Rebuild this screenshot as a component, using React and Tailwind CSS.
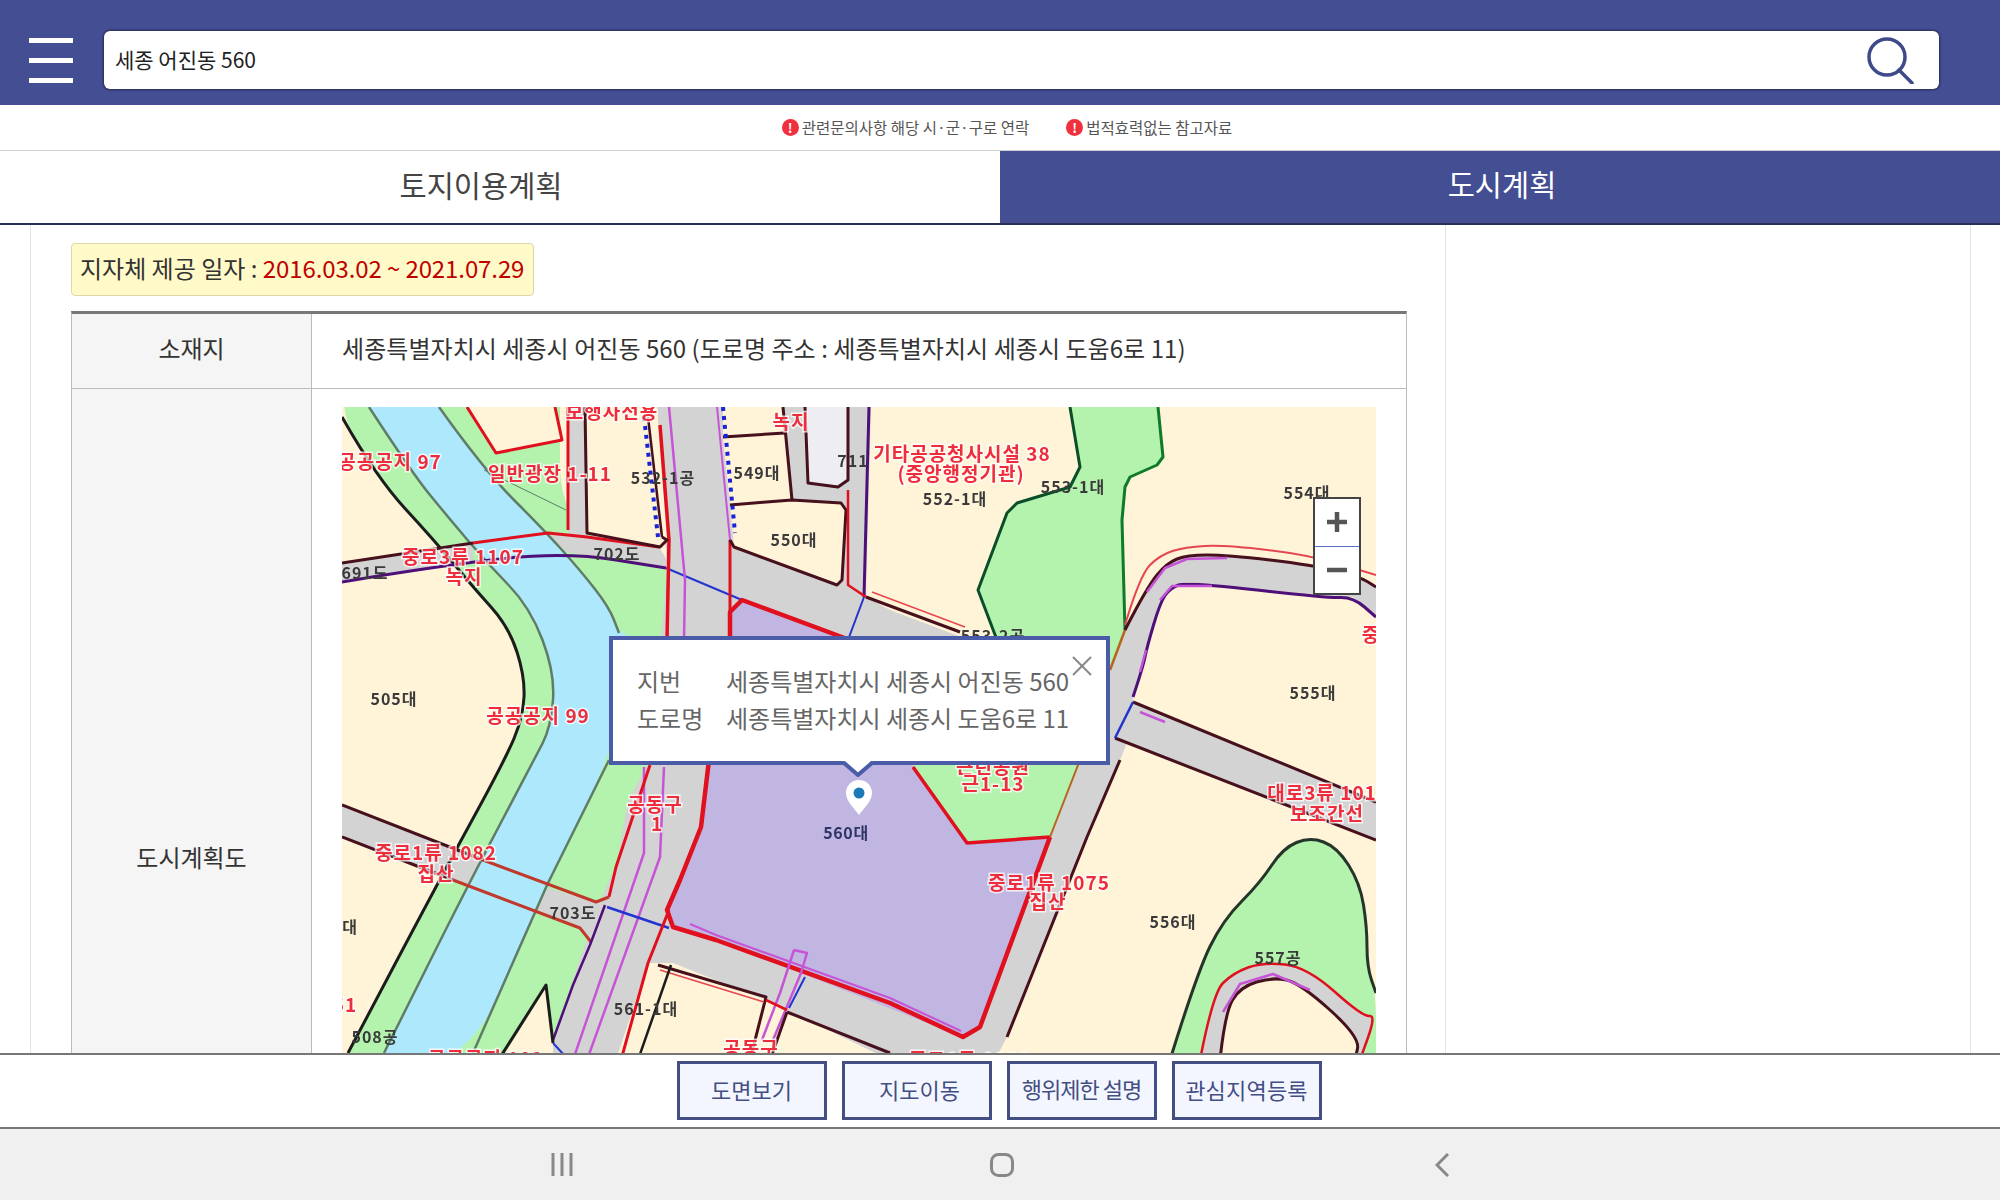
// Land use plan viewer: search header, tabs, plan table with parcel map, action bar
import React from 'react';

const CREAM = '#fff3d8';
const GREEN = '#b3f3ad';
const WATER = '#aee8fc';
const ROAD = '#d4d3d4';
const LILAC = '#c0b6e1';
const MAROON = '#46101c';
const RED = '#e0101f';
const THIN = '#e4474f';
const PURPLE = '#c654d6';
const DEEP = '#4e1078';
const BLUE = '#2233d0';
const RIVER = '#5f7d66';

// rounds off a point list so river banks and bends don't look jagged
const curve = (points) => {
  const p = points.split(' ').map((s) => s.split(',').map(Number));
  let d = `M${p[0]}`;
  for (let i = 1; i < p.length - 1; i++) {
    const mid = [(p[i][0] + p[i + 1][0]) / 2, (p[i][1] + p[i + 1][1]) / 2];
    d += ` Q${p[i]} ${mid}`;
  }
  return `${d} L${p[p.length - 1]}`;
};

// all map coordinates are page pixels, the svg viewBox starts at the map corner
const fills = [
  [GREEN, '345,400 342,417 376,477 434,540 473,587 509,627 525,677 523,717 505,760 441,877 348,1053 348,1060 660,1060 672,560 560,530 560,400', true],
  [GREEN, '566,552 666,568 670,640 668,780 590,780 590,600'],
  [WATER, '369,407 412,473 448,517 487,563 530,607 555,673 551,727 534,760 469,883 384,1053 384,1060 473,1060 548,883 609,760 640,640 619,633 609,607 580,570 544,530 484,470 439,407', true],
  [GREEN, '1070,407 1080,467 1070,487 1017,503 1007,513 978,590 997,640 1110,680 1125,630 1122,520 1125,487 1130,477 1157,465 1163,457 1158,407'],
  [GREEN, '1170,1060 1197,973 1223,920 1260,883 1283,848 1310,837 1337,847 1360,883 1367,927 1367,967 1376,993 1376,1060', true],
  [ROAD, '1200,1060 1213,993 1233,973 1263,962 1307,967 1363,1017 1376,1015 1360,1060', true],
  [CREAM, '1220,1060 1225,1013 1240,987 1273,977 1300,983 1360,1037 1355,1060', true],
  [CREAM, '467,407 496,453 562,440 555,407'],
  [CREAM, '501,1060 546,985 553,1043 553,1060'],
  [ROAD, '568,407 585,407 587,540 568,540'],
  [ROAD, '342,563 473,543 473,563 342,582'],
  [ROAD, '548,533 587,537 659,547 667,560 666,568 566,552'],
  [ROAD, '657,407 716,407 730,540 730,636 709,760 701,827 667,910 648,963 616,1060 553,1060 553,1037 573,980 600,900 616,867 628,800 650,760 667,568'],
  [ROAD, '716,407 871,407 866,597 890,610 1133,702 1376,802 1376,840 1167,760 1115,738 742,600 730,612 730,540'],
  [ROAD, '1125,630 1147,587 1167,563 1187,555 1227,555 1313,565 1360,577 1376,587 1376,617 1353,597 1327,598 1187,582 1170,588 1160,603 1147,647 1143,667 1133,697 1133,720 1125,748 1120,760 1087,837 1007,1037 995,1060 940,1060 963,1037 980,1027 1050,837 1080,760 1100,690'],
  [ROAD, '667,910 673,927 716,940 890,1003 963,1037 1000,1060 890,1060 766,1000 673,963 648,963'],
  [ROAD, '342,805 483,860 470,885 453,880 342,837'],
  [ROAD, '548,888 596,902 609,897 605,920 591,942 580,928 535,910'],
  [LILAC, '730,612 742,600 913,665 913,767 967,843 1050,837 980,1027 963,1037 716,940 673,927 667,910 701,827 709,760 728,640'],
  [GREEN, '913,660 1110,735 1080,760 1050,837 967,843 913,767'],
  [CREAM, '723,407 783,407 785,433 723,437'],
  [CREAM, '723,437 785,433 792,500 730,505'],
  [CREAM, '730,505 792,500 841,503 846,510 842,580 837,585 734,547'],
  ['#eeeef2', '805,407 848,407 848,480 838,487 808,483'],
  [CREAM, '585,407 657,407 667,540 587,533'],
];

const lines = [
  ['#1c1c1c', 3, '342,417 376,477 434,540 473,587 509,627 525,677 523,717 505,760 441,877 348,1053', true],
  [RIVER, 2.5, '369,407 412,473 448,517 487,563 530,607 555,673 551,727 534,760 469,883 384,1053', true],
  [RIVER, 2.5, '439,407 484,470 544,530 580,570 609,607 619,633', true],
  [RIVER, 2.5, '609,760 548,883 473,1053'],
  [RIVER, 1, '484,470 566,510'],
  [RED, 3, '467,407 496,453 562,440 555,407'],
  [MAROON, 3, '342,563 473,543'],
  [RED, 3, '473,543 548,533 587,537 659,547'],
  [DEEP, 3, '342,582 443,565 566,552 666,568', true],
  [BLUE, 2, '666,568 742,600'],
  [RED, 4.5, '730,640 730,612 742,600 850,640'],
  [RED, 3.5, '660,425 669,540 667,640'],
  [RED, 3, '730,540 730,612'],
  [PURPLE, 2.5, '669,407 685,580 684,640'],
  [PURPLE, 2, '717,407 730,540'],
  [RED, 3, '568,407 568,530'],
  [MAROON, 3, '585,407 587,533 660,547 667,540 662,537'],
  [MAROON, 2.5, '648,417 662,537'],
  [MAROON, 3, '723,437 785,433'],
  [MAROON, 3, '730,505 792,500 841,503 846,510 842,580 837,585 734,547 730,540'],
  [MAROON, 3, '783,407 792,500'],
  [MAROON, 3, '805,407 808,483 838,487 848,480 848,407'],
  [DEEP, 3, '869,407 864,597'],
  [RED, 2.5, '848,490 848,585 866,597'],
  [BLUE, 2, '864,597 848,640'],
  [MAROON, 3, '866,597 960,632'],
  [THIN, 1.5, '872,592 965,627'],
  [PURPLE, 2.5, '644,767 644,853 573,1060'],
  [PURPLE, 2.5, '664,767 660,857 587,1060'],
  [RED, 3, '650,765 616,867 609,897'],
  [MAROON, 3, '342,805 483,860'],
  [MAROON, 3, '342,837 453,880'],
  ['#c0392b', 3, '483,860 596,902 609,897'],
  ['#c0392b', 3, '453,880 580,928 591,942'],
  [BLUE, 2.5, '607,907 669,928'],
  [DEEP, 2.5, '605,905 590,945 573,985 553,1040'],
  [RED, 3, '669,910 648,963 621,1060'],
  [RED, 4.5, '709,760 701,827 680,880 667,910 673,927 716,940 890,1003 963,1037 980,1027 1050,837'],
  [PURPLE, 2, '690,924 716,935 890,998 961,1031'],
  [RED, 3.5, '913,767 967,843 1050,837'],
  ['#b5651d', 2, '1050,837 1080,760'],
  [PURPLE, 2.5, '794,950 807,953 801,973 773,1040'],
  [PURPLE, 2.5, '794,950 780,993 762,1040'],
  [BLUE, 2, '805,977 789,1008'],
  [MAROON, 3, '658,965 766,997 750,1060'],
  [MAROON, 3, '787,1012 890,1053'],
  [THIN, 1.5, '660,970 764,1002'],
  [RED, 2.5, '766,1000 787,1010'],
  [MAROON, 3, '787,1012 770,1060'],
  ['#1c1c1c', 2.5, '671,965 638,1060'],
  ['#1c1c1c', 3, '501,1056 546,985 553,1043'],
  [BLUE, 2, '553,1043 565,1056'],
  ['#0b4f2a', 3, '1070,407 1080,467 1070,487 1017,503 1007,513 978,590 997,640'],
  ['#0f7a2a', 3, '1158,407 1163,457 1157,465 1130,477 1125,487 1122,520 1125,630'],
  ['#b5651d', 2.5, '1125,630 1110,670'],
  [THIN, 2, '1125,625 1140,575 1160,555 1185,547 1225,545 1310,555 1376,575', true],
  [MAROON, 3, '1125,630 1147,587 1167,563 1187,555 1227,555 1313,565 1360,577 1376,587', true],
  [DEEP, 3, '1133,697 1143,667 1147,647 1160,603 1170,588 1187,582 1327,598 1353,597 1376,617', true],
  [PURPLE, 2.5, '1147,592 1165,568 1187,559 1227,558'],
  [PURPLE, 2.5, '1160,600 1172,586 1212,586'],
  [PURPLE, 2.5, '1146,650 1140,672'],
  [MAROON, 3, '1133,702 1376,802'],
  [MAROON, 3, '1115,738 1376,840'],
  [PURPLE, 2.5, '1140,712 1165,722'],
  [BLUE, 2.5, '1133,702 1115,738'],
  [MAROON, 3, '1120,760 1087,837 1007,1037'],
  ['#25352a', 3, '1170,1060 1197,973 1223,920 1260,883 1283,848 1310,837 1337,847 1360,883 1367,927 1367,967 1376,993', true],
  [RED, 2.5, '1200,1060 1213,993 1233,973 1263,962 1307,967 1363,1017 1376,1015 1360,1060', true],
  [MAROON, 3, '1220,1060 1225,1013 1240,987 1273,977 1300,983 1360,1037 1355,1060', true],
  [PURPLE, 2.5, '1223,1012 1240,984 1273,974 1310,990'],
];

const redLabels = [
  ['보행자전용', 612, 410],
  ['공공공지 97', 390, 460],
  ['일반광장 1-11', 550, 472],
  ['중로3류 1107', 463, 555],
  ['녹지', 464, 575],
  ['공공공지 99', 538, 714],
  ['기타공공청사시설 38', 962, 452],
  ['(중앙행정기관)', 961, 472],
  ['녹지', 791, 420],
  ['중', 1371, 633],
  ['근린공원', 993, 765],
  ['근1-13', 993, 782],
  ['공동구', 655, 803],
  ['1', 657, 822],
  ['중로1류 1082', 436, 851],
  ['집산', 436, 872],
  ['중로1류 1075', 1049, 881],
  ['집산', 1048, 900],
  ['대로3류 101', 1322, 791],
  ['보조간선', 1327, 812],
  ['공공공지 102', 486, 1057],
  ['공동구', 751, 1047],
  ['중로1류 1081', 970, 1058],
  ['51', 345, 1003],
];

const lotLabels = [
  ['532-1공', 663, 477],
  ['549대', 757, 472],
  ['711', 853, 460],
  ['550대', 794, 539],
  ['702도', 617, 553],
  ['691도', 365, 572],
  ['505대', 394, 698],
  ['552-1대', 955, 498],
  ['553-1대', 1073, 486],
  ['554대', 1307, 492],
  ['553-2공', 993, 635],
  ['555대', 1313, 692],
  ['703도', 573, 912],
  ['대', 350, 926],
  ['508공', 375, 1036],
  ['561-1대', 646, 1008],
  ['556대', 1173, 921],
  ['557공', 1278, 957],
];

const ParcelMap = () => (
  <svg viewBox="342 407 1034 900" className="block w-[1034px] h-[900px] blur-[0.5px]">
    <rect x="342" y="407" width="1034" height="900" fill={CREAM} />
    {fills.map(([color, points, smooth], i) =>
      smooth ? <path key={i} d={`${curve(points)} Z`} fill={color} /> : <polygon key={i} points={points} fill={color} />
    )}
    {lines.map(([color, width, points, smooth], i) =>
      smooth ? (
        <path key={i} d={curve(points)} fill="none" stroke={color} strokeWidth={width} strokeLinejoin="round" />
      ) : (
        <polyline key={i} points={points} fill="none" stroke={color} strokeWidth={width} strokeLinejoin="round" />
      )
    )}
    <polyline points="648,417 662,537" fill="none" stroke="#1a22d8" strokeWidth="4" strokeDasharray="4 5" transform="translate(-4 0)" />
    <polyline points="723,407 735,533" fill="none" stroke="#1a22d8" strokeWidth="4" strokeDasharray="4 5" />
    {lotLabels.map(([label, x, y]) => (
      <text key={label} x={x} y={y} textAnchor="middle" dominantBaseline="central" fontSize="16" fontWeight="700" letterSpacing="1" fill="#3a3a3a">
        {label}
      </text>
    ))}
    {redLabels.map(([label, x, y]) => (
      <text key={label + x} x={x} y={y} textAnchor="middle" dominantBaseline="central" fontSize="19" fontWeight="700" letterSpacing="1" fill="#ee2c3c" stroke="#ffffff" strokeOpacity="0.75" strokeWidth="3" paintOrder="stroke">
        {label}
      </text>
    ))}
    <path d="M859 780c-7.5 0-13 5.800-13 13 0 8 8 15 13 22 5-7 13-14 13-22 0-7.200-5.500-13-13-13z" fill="#ffffff" />
    <circle cx="859" cy="793" r="5.500" fill="#1a7ab8" />
    <text x="846" y="832" textAnchor="middle" dominantBaseline="central" fontSize="16" fontWeight="700" letterSpacing="0.6" fill="#2f3566">
      560대
    </text>
  </svg>
);

const Notice = ({ children }) => (
  <div className="flex items-center gap-[3px]">
    <span className="flex items-center justify-center w-[17px] h-[17px] rounded-full bg-[#f0303c] text-white text-[13px] font-bold leading-none">!</span>
    <span>{children}</span>
  </div>
);

const ActionButton = ({ children, className = '' }) => (
  <button className={`w-[150px] h-[59px] flex items-center justify-center border-[3px] border-[#434e83] bg-[#f4f6ff] text-[#434e83] text-[22px] ${className}`}>
    {children}
  </button>
);

const App = () => {
  return (
    <div className="w-full h-screen flex flex-col overflow-hidden bg-white font-['Noto_Sans_CJK_KR','Liberation_Sans',sans-serif]">
      <header className="h-[105px] shrink-0 flex items-center pl-[29px] pt-[15px] bg-[#434e93]">
        <div className="w-[44px] flex flex-col gap-[15px]">
          <span className="h-[5px] bg-white" />
          <span className="h-[5px] bg-white" />
          <span className="h-[5px] bg-white" />
        </div>
        <div className="ml-[31px] w-[1835px] h-[58px] flex items-center justify-between pl-[11px] pr-[25px] bg-white rounded-[6px] shadow-[0_0_2px_1px_rgba(20,20,40,0.6)]">
          <span className="text-[21px] text-[#222]">세종 어진동 560</span>
          <svg width="48" height="47" viewBox="0 0 48 47" fill="none" stroke="#3f4a8a" strokeWidth="3.500">
            <circle cx="21" cy="20" r="18" />
            <line x1="33" y1="33" x2="46" y2="46" strokeLinecap="round" />
          </svg>
        </div>
      </header>

      <div className="h-[46px] shrink-0 flex items-center justify-center gap-[37px] pl-[14px] text-[15.5px] text-[#555] border-b border-[#d0d0d0]">
        <Notice>관련문의사항 해당 시·군·구로 연락</Notice>
        <Notice>법적효력없는 참고자료</Notice>
      </div>

      <nav className="h-[74px] shrink-0 flex text-[29.5px]">
        <div className="w-[1000px] pr-[38px] pb-[6px] flex items-center justify-center border-b-2 border-[#2a2f55] text-[#444]">토지이용계획</div>
        <div className="w-[1000px] pl-[4px] pb-[7px] flex items-center justify-center border-b-2 border-[#2a2f55] bg-[#434e93] text-white">도시계획</div>
      </nav>

      <div className="flex-1 min-h-0 overflow-hidden flex pl-[30px]">
        <main className="w-[1416px] shrink-0 border-x border-[#e4e4e4] pl-[40px] pt-[18px]">
          <div className="w-[463px] h-[53px] flex items-center pl-[8px] pb-[4px] bg-[#fffac8] border border-[#ddd8a8] rounded-[4px] text-[24px] text-[#333] whitespace-nowrap">
            지자체 제공 일자 :&nbsp;<span className="text-[#c00000] tracking-[-0.1px]">2016.03.02 ~ 2021.07.29</span>
          </div>

          <div className="mt-[15px] w-[1336px] border-t-[3px] border-[#777] border-r border-l border-r-[#bbb] border-l-[#bbb] text-[24px] text-[#333]">
            <div className="flex h-[75px] border-b border-[#bbb]">
              <div className="w-[240px] shrink-0 pb-[6px] flex items-center justify-center bg-[#f5f5f5] border-r border-[#bbb]">소재지</div>
              <div className="flex-1 pb-[6px] flex items-center pl-[30px] whitespace-nowrap tracking-[0.05px]">세종특별자치시 세종시 어진동 560 (도로명 주소 : 세종특별자치시 세종시 도움6로 11)</div>
            </div>
            <div className="flex h-[937px]">
              <div className="w-[240px] shrink-0 pb-[2px] flex items-center justify-center bg-[#f5f5f5] border-r border-[#bbb]">도시계획도</div>
              <div className="flex-1 pl-[30px] pt-[18px]">
                <div className="relative w-[1034px] h-[900px] overflow-hidden">
                  <ParcelMap />

                  <div className="absolute left-[267px] top-[229px] w-[501px] h-[129px] border-4 border-[#4a5ba8] bg-white text-[#666] text-[24px] leading-[37px] pl-[24px] pt-[22px]">
                    <div className="flex">
                      <span className="w-[89px]">지번</span>
                      <span>세종특별자치시 세종시 어진동 560</span>
                    </div>
                    <div className="flex">
                      <span className="w-[89px]">도로명</span>
                      <span>세종특별자치시 세종시 도움6로 11</span>
                    </div>
                    <svg className="absolute left-[459px] top-[16px]" width="20" height="20" viewBox="0 0 20 20" stroke="#888" strokeWidth="2">
                      <line x1="1" y1="1" x2="19" y2="19" />
                      <line x1="19" y1="1" x2="1" y2="19" />
                    </svg>
                  </div>
                  <svg className="absolute left-[501px] top-[354px]" width="30" height="16" viewBox="0 0 30 16">
                    <path d="M0 0 L15 14 L30 0 Z" fill="#ffffff" />
                    <path d="M0 1 L15 14 L30 1" fill="none" stroke="#4a5ba8" strokeWidth="4" />
                  </svg>

                  <div className="absolute left-[971px] top-[90px] w-[48px] h-[98px] flex flex-col border-2 border-[#444] bg-white">
                    <div className="flex-1 flex items-center justify-center border-b border-[#5a6fc0]">
                      <svg width="20" height="20" viewBox="0 0 20 20" stroke="#555" strokeWidth="4.500">
                        <line x1="0" y1="10" x2="20" y2="10" />
                        <line x1="10" y1="0" x2="10" y2="20" />
                      </svg>
                    </div>
                    <div className="flex-1 flex items-center justify-center">
                      <svg width="20" height="6" viewBox="0 0 20 6" stroke="#555" strokeWidth="4.500">
                        <line x1="0" y1="3" x2="20" y2="3" />
                      </svg>
                    </div>
                  </div>
                </div>
              </div>
            </div>
          </div>
        </main>
        <aside className="w-[525px] shrink-0 border-r border-[#e4e4e4]" />
      </div>

      <div className="h-[74px] shrink-0 flex items-center justify-center gap-[15px] pr-[2px] pb-[1px] bg-white border-t-2 border-[#777]">
        <ActionButton className="pb-[3px]">도면보기</ActionButton>
        <ActionButton className="pl-[6px] pb-[3px]">지도이동</ActionButton>
        <ActionButton className="tracking-[-1px] pb-[5px]">행위제한 설명</ActionButton>
        <ActionButton className="tracking-[0.2px] pb-[3px]">관심지역등록</ActionButton>
      </div>

      <div className="h-[73px] shrink-0 flex items-center pl-[551px] bg-[#f0f0f0] border-t-2 border-[#777]">
        <svg width="22" height="23" viewBox="0 0 22 23" stroke="#888" strokeWidth="3">
          <line x1="2" y1="0" x2="2" y2="23" />
          <line x1="11" y1="0" x2="11" y2="23" />
          <line x1="20" y1="0" x2="20" y2="23" />
        </svg>
        <svg className="ml-[417px]" width="24" height="24" viewBox="0 0 24 24" fill="none" stroke="#888" strokeWidth="3">
          <rect x="1.500" y="1.500" width="21" height="21" rx="7" />
        </svg>
        <svg className="ml-[421px]" width="14" height="24" viewBox="0 0 14 24" fill="none" stroke="#888" strokeWidth="3">
          <polyline points="13,1 2,12 13,23" />
        </svg>
      </div>
    </div>
  );
};

export default App;
